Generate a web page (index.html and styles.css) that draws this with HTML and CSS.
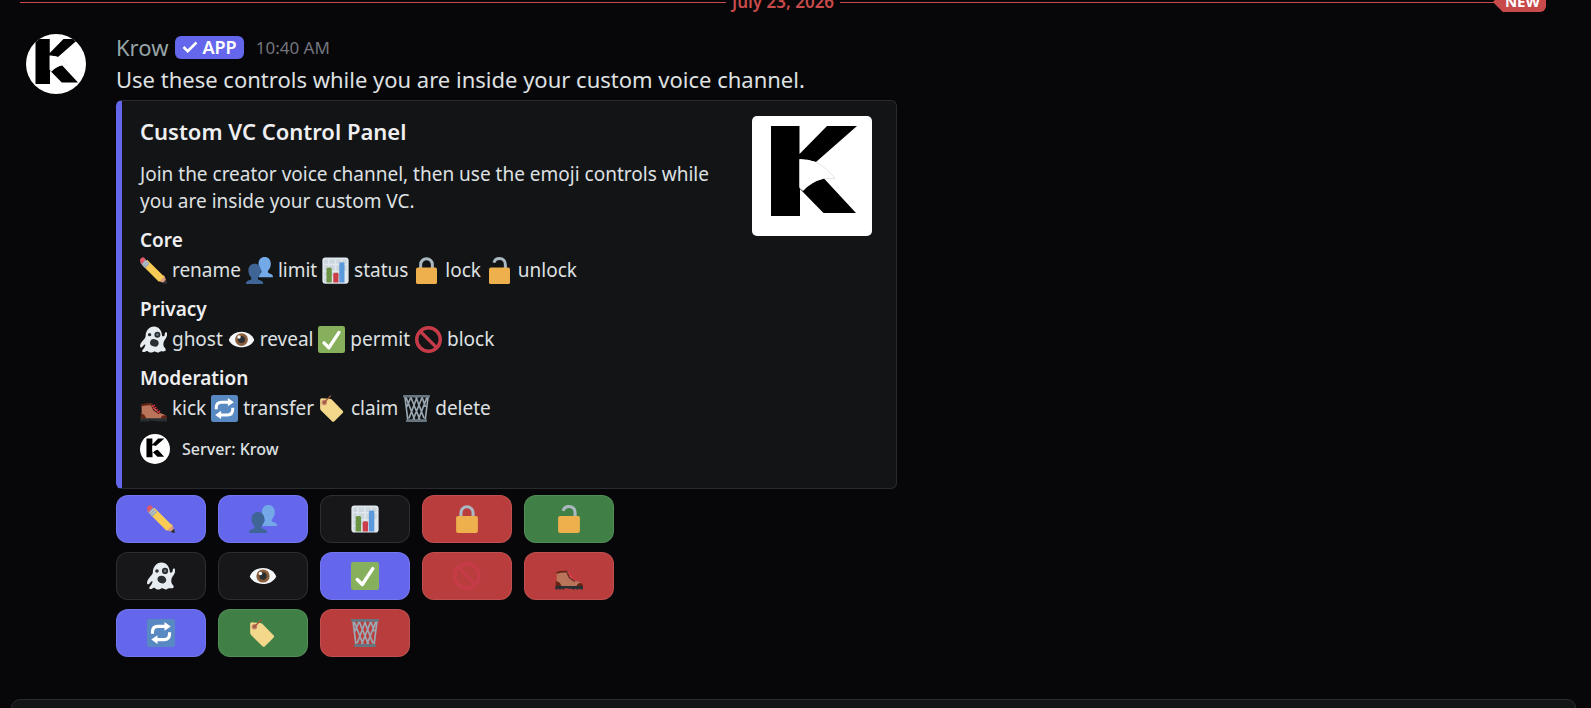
FILE: index.html
```html
<!DOCTYPE html>
<html lang="en">
<head>
<meta charset="UTF-8" />
<meta name="viewport" content="width=device-width, initial-scale=1.0" />
<title>Krow</title>
<link rel="stylesheet" href="styles.css">
</head>
<body>

<svg class="sprite" aria-hidden="true">
<symbol id="logo" viewBox="0 0 120 120">
<rect width="120" height="120" fill="#fff"/>
<path d="M19 10h28.500v28L75 10h30L64 46q-8-3-16.500-3v29l3.500 3q8-9 21-12.500L104 97H71.500L48 73v27H19z" fill="#000"/>
<path d="M47.500 43.500q9 0 16.500 2.500 11 6 19 16.500H72q-13 3-21 11.500l-3.500-3z" fill="#fff"/>
<path d="M64 46q11 6 19 16.500H72" fill="none" stroke="#e6e6e6"/>
</symbol>
<symbol id="pencil" viewBox="0 0 36 36">
<path d="M35.200 34.500c.6-1.500-2.200-8.500-3.400-10.500l-7.600 7.600c2 1.300 9 3.700 11 2.900z" fill="#d99e82"/>
<path d="M35.300 35.600c.9-.9.3-3.200-.8-5.100l-4 4c2 1 4 1.900 4.800 1.100z" fill="#292f33"/>
<path d="M9.500 3.500L32.400 26.200c-.4 1.900-1.500 2-2.600 2.100-.2 1.400-.8 2-2 2.100-.2 1.300-1.200 2.100-3 2.300L2.700 10.600z" fill="#f7cb55"/>
<path d="M5.400 1.800l7.400 7.200-5.800 5.900L.5 8z" fill="#99aab5"/>
<path d="M6.500 3.300L1.900 8M8.600 5.300L4 10M10.800 7.400L6 12.200" stroke="#ccd6dd" stroke-width="1.200"/>
<path d="M7.200 3.500L2.400 9.400C.8 7.800-.3 5.500 0 3.800.7 1.400 2.300.2 4.200.2c1.300 0 2.600 1.600 3 3.300z" fill="#e0596b"/>
</symbol>
<symbol id="people" viewBox="0 0 36 36">
<path d="M33 22.500c-2-.8-3.900-1-3.900-2.700 0-1 .6-1.800 1.400-2.800 1.500-1.800 2.600-4.500 2.600-8C33.100 3.500 29.700 0 24.900 0s-8.200 3.500-8.200 9c0 3.600 1 6.300 2.600 8.100.8.900 1.300 1.700 1.300 2.700 0 1.800-1.700 2-3.900 2.700V27H36c0-2.100-.5-3.600-3-4.500z" fill="#74a9e8"/>
<path d="M19.600 31.200c-2.200-.7-3.900-.9-3.900-2.600 0-1 .7-1.800 1.400-2.700 1.600-1.900 2.700-4.500 2.700-8 0-5.500-3.500-9-8.300-9s-8.300 3.500-8.300 9c0 3.500 1.100 6.100 2.700 8 .7.900 1.400 1.700 1.400 2.700 0 1.700-1.700 1.900-3.900 2.600C.9 32.100 0 33.500 0 36h23c0-2.500-.9-3.900-3.400-4.800z" fill="#3f6596"/>
</symbol>
<symbol id="chart" viewBox="0 0 36 36">
<rect x=".5" y=".5" width="35" height="35" rx="4" fill="#e1e8ed"/>
<path d="M3 3h5v6H3zm7 0h7v6h-7zm9 0h6v6h-6zm8 0h6v6h-6zM3 11h5v7H3zm7 0h7v7h-7zm9 0h6v7h-6zm8 0h6v7h-6zM3 20h5v6H3zm7 0h7v6h-7zm9 0h6v6h-6zM3 28h5v5H3z" fill="#ccd6dd"/>
<path d="M6 34V16q0-2 2-2h3q2 0 2 2v18z" fill="#6b9445"/>
<path d="M15 34V23q0-2 2-2h3q2 0 2 2v11z" fill="#cb3f4b"/>
<path d="M23 34V9q0-2 2-2h3q2 0 2 2v25z" fill="#5c98dc"/>
</symbol>
<symbol id="lock" viewBox="0 0 36 36">
<path d="M10.200 16v-6a7.800 7.800 0 0 1 15.600 0v6" fill="none" stroke="#aab8c2" stroke-width="4"/>
<rect x="4" y="14" width="28" height="22" rx="2.500" fill="#edb04c"/>
</symbol>
<symbol id="unlock" viewBox="0 0 36 36">
<path d="M25.800 16v-6C25.800 5 22.500 2 18 2c-3.600 0-6.500 2-7.500 5.500" fill="none" stroke="#aab8c2" stroke-width="4"/>
<rect x="4" y="14" width="28" height="22" rx="2.500" fill="#edb04c"/>
</symbol>
<symbol id="ghost" viewBox="0 0 36 36">
<path d="M35.700 8.800c-.8-1-2.300-.7-2.500 1l-.4 2.500c-.3 1.200-1.800 1.600-3.200 1.300C29 6 25 .7 18.700.7c-6.800 0-11 5.800-11.200 12.600C7.300 17.500 1.500 20 .2 25.500c-.5 2.200.5 3.800 2.200 2.800 1.300-.8 3-4.100 4.600-3.600.5 2.300-2.300 5.500-3.700 7.400-1 1.600.1 3.300 2.600 2.500 1.600-.6 3.200-2 4.400-1 1.200 1.100 3.700 2 5.400 1.600 2-.4 2.800-1.500 4-1.300 1.600.3 3 1.700 5.300 1.300 1.500-.4 1.400-1.500 3.300-1.500 2.700.2 5.700.5 6-1.700.3-2.300-3.200-3.200-3.100-7 0-3.100.7-4.700 2.400-7.200 1.700-2.400 3.300-6 2.100-9z" fill="#e6ecf0"/>
<circle cx="12.800" cy="11.500" r="2.300" fill="#292f33"/>
<circle cx="23.200" cy="11.500" r="4" fill="#292f33"/>
<circle cx="23.200" cy="11.500" r="1.700" fill="#66757f"/>
<ellipse cx="19.300" cy="22.500" rx="5.800" ry="4.800" transform="rotate(20 19 22)" fill="#292f33"/>
</symbol>
<symbol id="eye" viewBox="0 0 36 36">
<path d="M1 18.600C6.500 4 29.500 4 35 18.600 29 31.500 7 31.500 1 18.600z" fill="#f5f8fa"/>
<circle cx="18" cy="18" r="8.500" fill="#8a5d3b"/>
<circle cx="18" cy="18" r="4.700" fill="#292f33"/>
<circle cx="14.700" cy="14.700" r="2.300" fill="#f5f8fa"/>
</symbol>
<symbol id="check" viewBox="0 0 36 36">
<rect width="36" height="36" rx="3" fill="#86b05c"/>
<path d="M8 22.500l6.500 6.500L28 8.500" fill="none" stroke="#fff" stroke-width="4.400" stroke-linecap="round" stroke-linejoin="round"/>
</symbol>
<symbol id="block" viewBox="0 0 36 36">
<circle cx="18" cy="18" r="15.700" fill="none" stroke="#c53c48" stroke-width="4.600"/>
<path d="M7.500 7.500l21 21" stroke="#c53c48" stroke-width="4.600"/>
</symbol>
<symbol id="boot" viewBox="0 0 36 36">
<path d="M2 13.500q6-2.500 14-2l2 4 8.500 8.500c3 1.300 7.500 1.500 8.500 4.800v3.200H1q2-9 1-18.500z" fill="#b9745a"/>
<path d="M1.500 12.800q7-2.300 14.500-1.500v2.300q-7-.5-14 1.500zM1 24.500c4.500.5 6.500 3.500 7.500 7L.8 31zM27.500 31.500c1-3.500 3.500-5 6-4.300 2 .8 2.500 2.800 2.500 4.500z" fill="#652515"/>
<path d="M.5 31H36v3l-.5 1.500h-3V34.500h-2v1h-3v-1h-2v1h-3v-1h-3.500L12 33.500v2H9.500v-1h-2v1H5v-1H3.500v1H.5z" fill="#292f33"/>
<path d="M15.500 13.500l3 6.500 7 5" fill="none" stroke="#50201b" stroke-width="1.800"/>
<path d="M16 15.500l4-2M17.500 18.500l4.500-2.500M20 21.500l4-3M23.500 24l3.500-3" stroke="#dd2e44" stroke-width="1.500"/>
</symbol>
<symbol id="transfer" viewBox="0 0 36 36">
<rect width="36" height="36" rx="3" fill="#5889c2"/>
<path d="M7 19v-2Q7 9.500 14 9.500h10M29 17v2q0 7.500-7 7.500H12" fill="none" stroke="#fff" stroke-width="4"/>
<path d="M22.500 4l8 5.500-8 5.500zM13.500 21l-8 5.500 8 5.500z" fill="#fff"/>
</symbol>
<symbol id="tag" viewBox="0 0 36 36">
<path d="M1.500 6.500q0-2 2-2.200L14 5q2 0 3 1l14.500 15q1.500 1.500 0 3L20.500 35q-1.500 1.500-3.200 0L3 21q-1.500-1.500-1.500-3.500z" fill="#f3d88b"/>
<circle cx="7" cy="10" r="3.600" fill="#c98268"/>
<circle cx="7" cy="10" r="1.700" fill="#8f5a48"/>
<path d="M7 10L15.500 1.200" stroke="#a3593f" stroke-width="1.700" stroke-linecap="round"/>
</symbol>
<symbol id="basket" viewBox="0 0 36 36">
<path d="M2.500 2l4 32M10 2l13 32M17 2l11 29M25 2l5 14M33.500 2l-4 32M26 2L13 34M19 2L8 31M11 2L5 16M4 3l12 31M32 3L20 34" fill="none" stroke="#9aa8b3" stroke-width="2.200"/>
<rect width="36" height="3.400" rx="1.200" fill="#66757f"/>
<rect x="4" y="32.300" width="28" height="3.700" rx="1.200" fill="#66757f"/>
</symbol>
</svg>

<main class="chat">
<div class="divider">
<span class="date">July 23, 2026</span>
<span class="new">NEW</span>
</div>

<article class="message">
<svg class="avatar" role="img" aria-label="Krow"><use href="#logo"/></svg>
<div class="content">
<header class="message-header">
<span class="username">Krow</span>
<span class="app-tag"><svg viewBox="0 0 16 12"><path d="M1.500 6l4.200 4.200L14.500 1.500" fill="none" stroke="#fff" stroke-width="2.600"/></svg>APP</span>
<time>10:40 AM</time>
</header>
<p class="text">Use these controls while you are inside your custom voice channel.</p>

<section class="embed">
<div class="embed-body">
<h3>Custom VC Control Panel</h3>
<p>Join the creator voice channel, then use the emoji controls while you are inside your custom VC.</p>
<h4>Core</h4>
<p class="field"><svg><use href="#pencil"/></svg> rename <svg><use href="#people"/></svg> limit <svg><use href="#chart"/></svg> status <svg><use href="#lock"/></svg> lock <svg><use href="#unlock"/></svg> unlock</p>
<h4>Privacy</h4>
<p class="field"><svg><use href="#ghost"/></svg> ghost <svg><use href="#eye"/></svg> reveal <svg><use href="#check"/></svg> permit <svg><use href="#block"/></svg> block</p>
<h4>Moderation</h4>
<p class="field"><svg><use href="#boot"/></svg> kick <svg><use href="#transfer"/></svg> transfer <svg><use href="#tag"/></svg> claim <svg><use href="#basket"/></svg> delete</p>
<footer><svg viewBox="-12 -12 144 144"><use href="#logo" width="120" height="120"/></svg>Server: Krow</footer>
</div>
<svg class="thumbnail" role="img" aria-label="Krow"><use href="#logo"/></svg>
</section>

<div class="buttons">
<button class="primary" aria-label="rename"><svg><use href="#pencil"/></svg></button>
<button class="primary" aria-label="limit"><svg><use href="#people"/></svg></button>
<button aria-label="status"><svg><use href="#chart"/></svg></button>
<button class="danger" aria-label="lock"><svg><use href="#lock"/></svg></button>
<button class="success" aria-label="unlock"><svg><use href="#unlock"/></svg></button>
<button aria-label="ghost"><svg><use href="#ghost"/></svg></button>
<button aria-label="reveal"><svg><use href="#eye"/></svg></button>
<button class="primary" aria-label="permit"><svg><use href="#check"/></svg></button>
<button class="danger" aria-label="block"><svg><use href="#block"/></svg></button>
<button class="danger" aria-label="kick"><svg><use href="#boot"/></svg></button>
<button class="primary" aria-label="transfer"><svg><use href="#transfer"/></svg></button>
<button class="success" aria-label="claim"><svg><use href="#tag"/></svg></button>
<button class="danger" aria-label="delete"><svg><use href="#basket"/></svg></button>
</div>
</div>
</article>

<div class="composer"></div>
</main>

</body>
</html>
```
FILE: styles.css
```css
* { box-sizing: border-box; }

html, body {
margin: 0; padding: 0; height: 100%;
overflow: hidden;
font-family: "Noto Sans", "Open Sans", sans-serif;
background: #070709; color: #dfe0e2;
}

h3, h4, p { margin: 0; }

.sprite { display: none; }

/* scrolled so that the date line is cut by the top edge */
.chat {
display: flex; flex-direction: column;
height: calc(100vh + 10px);
margin-top: -10px;
}

.divider {
position: relative;
display: flex; align-items: center;
flex: none;
height: 24px;
margin: 0 45px 0 20px;
color: #c84a4a;
font-size: 17px; font-weight: 600; line-height: 22px;
}

.divider::before,
.divider::after {
content: ""; flex: 1;
height: 1px; background: #c84a4a;
}

.date { padding: 0 6px; }

/* badge lies over the right end of the line */
.new {
position: absolute; top: 2px; right: 0;
height: 20px; padding: 0 6px 0 12px;
background: #c84a4a; color: #fff;
font-size: 15px; font-weight: 700; line-height: 18px;
border-radius: 0 6px 6px 0;
clip-path: polygon(0 50%, 10px 0, 100% 0, 100% 100%, 10px 100%);
}

.message {
display: flex; gap: 30px;
flex: none;
padding: 20px 45px 0 26px;
}

.avatar {
flex: none;
width: 60px; height: 60px;
border-radius: 50%;
}

.content { flex: 1; min-width: 0; }

.message-header {
display: flex; align-items: center;
height: 26px;
}

.username { font-size: 22px; color: #95a5a6; }

.app-tag {
display: flex; align-items: center; gap: 4px;
height: 23px; margin: 0 12px 0 7px; padding: 0 7px;
border-radius: 6px;
background: #6467eb; color: #fff;
font-size: 18px; font-weight: 600;
}

.app-tag svg { width: 16px; height: 12px; }

time { font-size: 17px; line-height: 20px; padding-top: 2px; color: #74757e; }

.text {
font-size: 22px; line-height: 33px;
margin: 3px 0 4px;
}

.embed {
display: flex; justify-content: space-between; gap: 24px;
max-width: 781px;
padding: 15px 24px 24px 18px;
border: 1px solid #2a2b2f; border-left: 6px solid #6467eb;
border-radius: 6px;
background: #131416;
}

.embed-body {
flex: 1;
font-size: 19px; line-height: 27px;
}

.embed h3 {
font-size: 22px; font-weight: 600; line-height: 30px;
margin-bottom: 15px;
}

.embed h4 {
font-size: 19px; font-weight: 600;
margin: 12px 0 3px;
}

.embed h3, .embed h4 { color: #efeff1; }

.field svg {
width: 27px; height: 27px;
vertical-align: bottom;
}

.embed footer {
display: flex; align-items: center; gap: 12px;
margin-top: 12px;
font-size: 16px; font-weight: 500;
}

.embed footer svg {
width: 30px; height: 30px;
border-radius: 50%;
background: #fff;
}

.thumbnail {
flex: none;
width: 120px; height: 120px;
border-radius: 5px;
}

.buttons {
display: grid; grid-template-columns: repeat(5, 90px);
gap: 9px 12px;
margin-top: 6px;
}

.buttons button {
display: flex; justify-content: center; align-items: center;
height: 48px; padding: 0;
border: 1px solid rgba(255, 255, 255, 0.1); border-radius: 12px;
background: #17171a;
cursor: pointer;
}

.buttons svg { width: 28px; height: 28px; }

.buttons .primary { background: #6467eb; }
.buttons .danger { background: #b93d3d; }
.buttons .success { background: #408046; }

.composer {
flex: 1;
margin: 42px 15px 0 11px;
border: 1px solid #2a2b2f; border-bottom: 0;
border-radius: 12px 12px 0 0;
background: #131416;
}
```
